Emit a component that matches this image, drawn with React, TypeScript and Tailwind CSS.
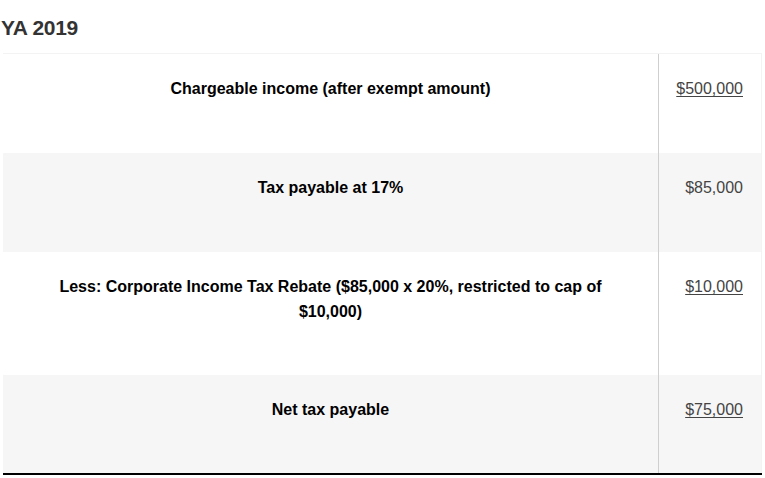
import React from "react";

const rows = [
  { label: "Chargeable income (after exempt amount)", value: "$500,000", underline: true, bg: "bg-white", pb: "pb-[52px]" },
  { label: "Tax payable at 17%", value: "$85,000", underline: false, bg: "bg-[#f6f6f6]", pb: "pb-[52px]" },
  {
    label: "Less: Corporate Income Tax Rebate ($85,000 x 20%, restricted to cap of $10,000)",
    value: "$10,000",
    underline: true,
    bg: "bg-white",
    pb: "pb-[51px]",
  },
  { label: "Net tax payable", value: "$75,000", underline: true, bg: "bg-[#f6f6f6]", pb: "pb-[51px]" },
];

export default function App() {
  return (
    <div className="w-[765px] h-[478px] bg-white font-['Liberation_Sans',Arial,sans-serif] overflow-hidden">
      <h1 className="pt-[16px] pl-[1px] text-[21px] leading-[24px] font-bold text-[#333] tracking-[-0.3px]">YA 2019</h1>
      <div className="mt-[13px] ml-[3px] w-[759px] border-t border-[#f3f3f3] border-b-2 border-b-black">
        {rows.map((r, i) => (
          <div key={i} className={`flex ${r.bg}`}>
            <div className={`w-[655px] pt-[22px] ${r.pb} px-[40px] text-center text-[16px] leading-[25px] font-bold text-black`}>
              {r.label}
            </div>
            <div className="w-px bg-[#cfcfcf]" />
            <div className={`flex-1 pt-[22px] ${r.pb} pr-[18px] text-right text-[16px] leading-[25px] text-[#444] border-r border-[#f3f3f3]`}>
              <span className={r.underline ? "underline underline-offset-2" : ""}>{r.value}</span>
            </div>
          </div>
        ))}
      </div>
    </div>
  );
}
